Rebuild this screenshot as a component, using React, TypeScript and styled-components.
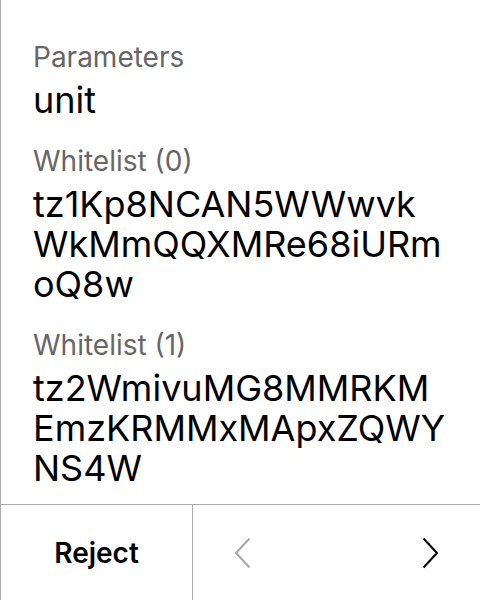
import React from "react";
import styled, { createGlobalStyle } from "styled-components";

const Global = createGlobalStyle`
  html, body { margin: 0; padding: 0; background: #fff; }
  body { font-family: Inter, "Noto Sans", sans-serif; -webkit-font-smoothing: antialiased; }
`;

const Screen = styled.div`
  width: 480px;
  height: 600px;
  box-sizing: border-box;
  border-left: 1px solid #ababab;
  display: flex;
  flex-direction: column;
  background: #fff;
`;

const Content = styled.div`
  flex: 1;
  padding: 40px 12px 0 32px;
  display: flex;
  flex-direction: column;
  gap: 24px;
  overflow: hidden;
`;

const Field = styled.div`
  display: flex;
  flex-direction: column;
  gap: 6px;
`;

const Label = styled.div`
  font-size: 28px;
  line-height: 34px;
  color: #666666;
`;

const Value = styled.div`
  font-size: 36px;
  line-height: 40px;
  color: #000;
  word-break: break-all;
`;

const Footer = styled.div`
  height: 95px;
  flex-shrink: 0;
  border-top: 1px solid #ababab;
  display: flex;
`;

const RejectButton = styled.button`
  width: 192px;
  border: none;
  border-right: 1px solid #ababab;
  background: transparent;
  font-family: Inter, sans-serif;
  font-size: 28px;
  font-weight: 600;
  color: #000;
  padding: 0;
`;

const Nav = styled.div`
  flex: 1;
  display: flex;
  align-items: center;
  justify-content: space-between;
  padding: 0 42px 0 42px;
`;

const NavButton = styled.button<{ $disabled?: boolean }>`
  border: none;
  background: transparent;
  padding: 0;
  display: flex;
  color: ${(p) => (p.$disabled ? "#a8a8a8" : "#000")};
`;

const Chevron = ({ dir }: { dir: "left" | "right" }) => (
  <svg width="16" height="32" viewBox="0 0 16 32" fill="none">
    <path
      d={dir === "right" ? "M1.5 1.5 L15 16 L1.5 30.5" : "M14.5 1.5 L1 16 L14.5 30.5"}
      stroke="currentColor"
      strokeWidth="2"
    />
  </svg>
);

const fields = [
  { label: "Parameters", value: "unit" },
  { label: "Whitelist (0)", value: "tz1Kp8NCAN5WWwvk\nWkMmQQXMRe68iURm\noQ8w" },
  { label: "Whitelist (1)", value: "tz2WmivuMG8MMRKM\nEmzKRMMxMApxZQWY\nNS4W" },
];

export default function App() {
  return (
    <>
      <Global />
      <Screen>
        <Content>
          {fields.map((f) => (
            <Field key={f.label}>
              <Label>{f.label}</Label>
              <Value>
                {f.value.split("\n").map((l, i) => (
                  <div key={i}>{l}</div>
                ))}
              </Value>
            </Field>
          ))}
        </Content>
        <Footer>
          <RejectButton>Reject</RejectButton>
          <Nav>
            <NavButton $disabled aria-label="Previous">
              <Chevron dir="left" />
            </NavButton>
            <NavButton aria-label="Next">
              <Chevron dir="right" />
            </NavButton>
          </Nav>
        </Footer>
      </Screen>
    </>
  );
}
